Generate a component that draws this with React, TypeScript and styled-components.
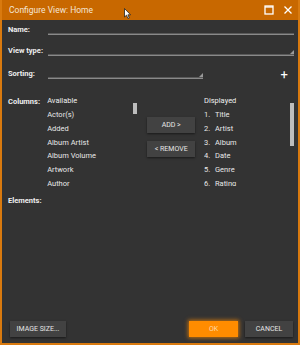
import styled, { createGlobalStyle } from "styled-components";

const Global = createGlobalStyle`
  html, body { margin: 0; padding: 0; background: #333; }
  body { font-family: Roboto, "Liberation Sans", sans-serif; }
`;

const Window = styled.div`
  width: 300px;
  height: 345px;
  box-sizing: border-box;
  border: 2px solid #d97a0f;
  border-top: none;
  background: #333333;
  display: flex;
  flex-direction: column;
  position: relative;
  overflow: hidden;
`;

const TitleBar = styled.div`
  height: 20px;
  margin: 0 -2px;
  padding: 0 7px 0 9px;
  background: #c86800;
  display: flex;
  align-items: center;
  color: #f4e6d6;
  font-size: 8.5px;
`;

const Title = styled.div`
  flex: 1;
`;

const TitleIcons = styled.div`
  display: flex;
  align-items: center;
  gap: 9px;
`;

const Body = styled.div`
  flex: 1;
  display: flex;
  flex-direction: column;
  padding: 4px 4px 6px 6px;
`;

const Row = styled.div<{ $h: number }>`
  height: ${({ $h }) => $h}px;
  display: flex;
  align-items: flex-start;
`;

const Label = styled.div`
  width: 40px;
  font-size: 7.5px;
  font-weight: 700;
  color: #eeeeee;
  padding-top: 1px;
`;

const Field = styled.div<{ $w?: number; $tri?: boolean }>`
  margin-top: 9px;
  height: 1px;
  border-bottom: 1px solid #8a8a8a;
  background: #5a5a5a;
  ${({ $w }) => ($w ? `width: ${$w}px;` : "flex: 1;")}
  position: relative;
  &::after {
    content: "";
    display: ${({ $tri }) => ($tri ? "block" : "none")};
    position: absolute;
    right: 0;
    bottom: 1px;
    border-left: 4px solid transparent;
    border-bottom: 4px solid #9a9a9a;
  }
`;

const Plus = styled.div`
  margin-left: auto;
  margin-right: 6px;
  margin-top: 2px;
  color: #ffffff;
  font-size: 13px;
  line-height: 10px;
`;

const Columns = styled.div`
  display: flex;
  height: 90px;
  margin-top: 8px;
`;

const List = styled.div<{ $w: number }>`
  width: ${({ $w }) => $w}px;
  position: relative;
  overflow: hidden;
`;

const ListHead = styled.div`
  font-size: 7.5px;
  color: #f0f0f0;
  height: 14px;
`;

const Item = styled.div`
  font-size: 7.5px;
  color: #e8e8e8;
  height: 13.8px;
  white-space: nowrap;
`;

const Num = styled.span`
  display: inline-block;
  width: 11px;
`;

const Thumb = styled.div<{ $top: number; $h: number }>`
  position: absolute;
  right: 0;
  top: ${({ $top }) => $top}px;
  width: 4px;
  height: ${({ $h }) => $h}px;
  background: #bdbdbd;
`;

const Middle = styled.div`
  width: 58px;
  display: flex;
  flex-direction: column;
  gap: 8px;
  padding: 21px 0 0 10px;
`;

const Btn = styled.div<{ $w: number; $primary?: boolean }>`
  width: ${({ $w }) => $w}px;
  height: 16px;
  display: flex;
  align-items: center;
  justify-content: center;
  font-size: 7px;
  color: ${({ $primary }) => ($primary ? "#ffd9a8" : "#e6e6e6")};
  background: ${({ $primary }) => ($primary ? "#ff8c00" : "#424242")};
  box-shadow: ${({ $primary }) =>
    $primary ? "0 0 4px 1px rgba(255,140,0,0.7)" : "0 1px 2px rgba(0,0,0,0.5)"};
`;

const Elements = styled(Label)`
  margin-top: 9px;
  width: auto;
`;

const Footer = styled.div`
  margin-top: auto;
  display: flex;
  align-items: center;
  gap: 7px;
  padding: 0 1px 0 2px;
`;

const Spacer = styled.div`
  flex: 1;
`;

const Cursor = styled.svg`
  position: absolute;
  left: 122px;
  top: 8px;
`;

const available = ["Actor(s)", "Added", "Album Artist", "Album Volume", "Artwork", "Author"];
const displayed = ["Title", "Artist", "Album", "Date", "Genre", "Rating"];

export default function App() {
  return (
    <>
      <Global />
      <Window>
        <TitleBar>
          <Title>Configure View: Home</Title>
          <TitleIcons>
            <svg width="10" height="10" viewBox="0 0 10 10">
              <rect x="1" y="1" width="8" height="8" fill="none" stroke="#fff" strokeWidth="1.3" />
              <line x1="1" y1="2" x2="9" y2="2" stroke="#fff" strokeWidth="1.3" />
            </svg>
            <svg width="10" height="10" viewBox="0 0 10 10">
              <path d="M1.5 1.5 L8.5 8.5 M8.5 1.5 L1.5 8.5" stroke="#fff" strokeWidth="1.3" />
            </svg>
          </TitleIcons>
        </TitleBar>
        <Body>
          <Row $h={21}>
            <Label>Name:</Label>
            <Field />
          </Row>
          <Row $h={23}>
            <Label>View type:</Label>
            <Field $tri />
          </Row>
          <Row $h={20}>
            <Label>Sorting:</Label>
            <Field $w={155} $tri />
            <Plus>+</Plus>
          </Row>
          <Columns>
            <Label>Columns:</Label>
            <List $w={92}>
              <ListHead>Available</ListHead>
              {available.map((a) => (
                <Item key={a}>{a}</Item>
              ))}
              <Thumb $top={7} $h={11} />
            </List>
            <Middle>
              <Btn $w={48}>ADD &gt;</Btn>
              <Btn $w={48}>&lt; REMOVE</Btn>
            </Middle>
            <List $w={92}>
              <ListHead>Displayed</ListHead>
              {displayed.map((d, i) => (
                <Item key={d}>
                  <Num>{i + 1}.</Num>
                  {d}
                </Item>
              ))}
              <Thumb $top={7} $h={43} />
            </List>
          </Columns>
          <Elements>Elements:</Elements>
          <Footer>
            <Btn $w={56}>IMAGE SIZE...</Btn>
            <Spacer />
            <Btn $w={49} $primary>
              OK
            </Btn>
            <Btn $w={48}>CANCEL</Btn>
          </Footer>
        </Body>
        <Cursor width="8" height="12" viewBox="0 0 8 12">
          <path d="M0.5 0.5 L0.5 9 L2.5 7.2 L4 10.5 L5.3 9.9 L3.9 6.8 L6.6 6.8 Z" fill="#fff" stroke="#222" strokeWidth="0.8" />
        </Cursor>
      </Window>
    </>
  );
}
